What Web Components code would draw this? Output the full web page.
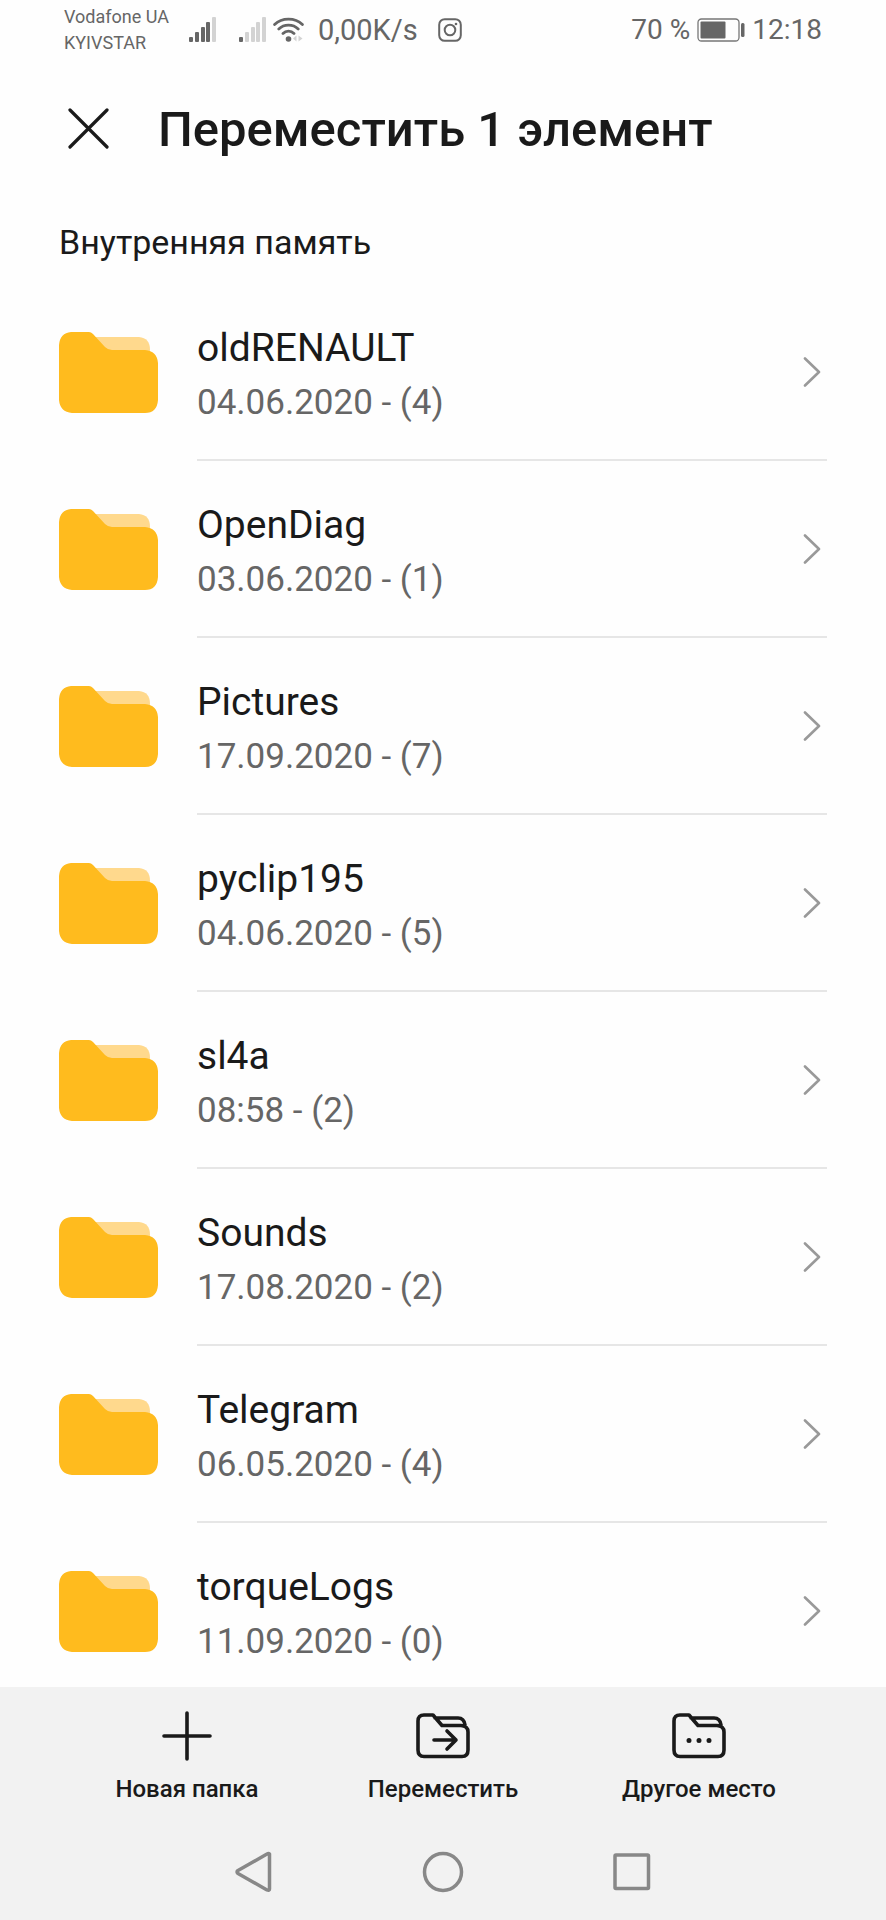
<!DOCTYPE html>
<html lang="ru">
<head>
<meta charset="utf-8">
<meta name="viewport" content="width=device-width, initial-scale=1">
<title>Переместить 1 элемент</title>
<style>
  body { margin: 0; background: #fefefe; color: #1a1a1a; font-family: Roboto, "Noto Sans", sans-serif; }
</style>
</head>
<body>
<move-screen></move-screen>
<script>
const define = (name, html) => {
  const template = document.createElement('template');
  template.innerHTML = html;
  customElements.define(name, class extends HTMLElement {
    constructor() {
      super();
      this.attachShadow({ mode: 'open' }).append(template.content.cloneNode(true));
    }
  });
};

define('status-bar', `
  <style>
    :host { display: flex; align-items: center; height: 60px; padding: 0 64px; color: #666; font-size: 28px; line-height: 32px; white-space: nowrap; }
    svg { display: block; flex: none; }
    .carriers { font-size: 18px; line-height: 26px; margin-right: 20px; }
    .signal { margin-right: 22px; }
    .wifi { margin: 0 14px 0 -16px; }
    .speed { font-size: 29px; }
    .camera { margin-left: 20px; }
    .power { margin-left: auto; display: flex; align-items: center; gap: 7px; }
  </style>
  <div class="carriers">Vodafone UA<br>KYIVSTAR</div>
  <svg class="signal" width="28" height="26" aria-hidden="true">
    <g fill="#666"><rect x="0" y="20" width="4" height="5" rx="1"/><rect x="6" y="15" width="4" height="10" rx="1"/><rect x="12" y="10" width="4" height="15" rx="1"/><rect x="17" y="5" width="4" height="20" rx="1"/></g>
    <rect x="23" width="4" height="25" rx="1" fill="#d3d3d3"/>
  </svg>
  <svg class="signal" width="28" height="26" aria-hidden="true">
    <rect x="0" y="20" width="4" height="5" rx="1" fill="#666"/>
    <g fill="#d3d3d3"><rect x="6" y="15" width="4" height="10" rx="1"/><rect x="12" y="10" width="4" height="15" rx="1"/><rect x="17" y="5" width="4" height="20" rx="1"/><rect x="23" width="4" height="25" rx="1"/></g>
  </svg>
  <svg class="wifi" width="31" height="26" aria-hidden="true">
    <g fill="none" stroke="#666" stroke-width="2.8" stroke-linecap="round"><path d="M1.6 7.5C9 .2 22 .2 29.400 7.500M5.800 12c5.200-5.200 14.200-5.200 19.400 0M10 16.400c3-3 8-3 11 0"/></g>
    <circle cx="15.500" cy="22" r="2.800" fill="#666"/><path d="M23.500 18.500v6l-3.500-3zM25.500 18.500v6l4-3z" fill="#d3d3d3"/>
  </svg>
  <span class="speed">0,00K/s</span>
  <svg class="camera" width="24" height="24" fill="none" stroke="#666" aria-hidden="true">
    <rect x="1.200" y="1.200" width="21.600" height="21.600" rx="5.500" stroke-width="2"/><circle cx="12" cy="12" r="5.300" stroke-width="2"/><circle cx="18" cy="6" r="1.300" fill="#666" stroke="none"/>
  </svg>
  <div class="power">
    <span>70 %</span>
    <svg width="48" height="24" aria-hidden="true">
      <rect x="1" y="1" width="41" height="22" rx="3.500" fill="none" stroke="#777" stroke-width="1.300"/><rect x="3.500" y="3.500" width="25" height="17" rx="1" fill="#666"/><rect x="44" y="5" width="3.500" height="14" rx="1.500" fill="#666"/>
    </svg>
    <span>12:18</span>
  </div>`);

define('page-header', `
  <style>
    :host { display: flex; align-items: center; gap: 49px; padding: 40px 60px 42px 68px; }
    button { display: block; padding: 0; border: 0; background: none; color: inherit; }
    svg { display: block; }
    h1 { margin: 0; font-size: 49px; font-weight: 500; line-height: 60px; }
  </style>
  <button type="button" aria-label="Закрыть"><svg width="41" height="44" fill="none" stroke="currentColor" stroke-width="3.200" stroke-linecap="round"><path d="M2 2l37 37M39 2L2 39"/></svg></button>
  <h1><slot></slot></h1>`);

define('folder-row', `
  <style>
    :host { display: block; padding-left: 59px; }
    a { display: flex; align-items: center; color: inherit; text-decoration: none; }
    svg { display: block; flex: none; }
    .body { flex: 1; display: flex; align-items: center; justify-content: space-between; box-sizing: border-box; height: 177px; margin: 0 59px 0 39px; border-bottom: 2px solid #e6e6e6; }
    .text { display: grid; gap: 12px; padding-top: 4px; }
    .name { font-size: 39px; line-height: 46px; }
    .meta { font-size: 35px; line-height: 40px; color: #666; }
    .chevron { margin-right: 6px; }
  </style>
  <a href="#">
    <svg width="99" height="82" aria-hidden="true">
      <path d="M30 5H80Q91 6 91 18V30H50Z" fill="#ffd98d"/>
      <path d="M12 0H30Q32 0 34 2L46 15Q49 18 53 18H86Q98 19 99 31V68Q98 81 86 81H13Q1 80 0 68V13Q1 1 12 0Z" fill="#ffbb1e"/>
    </svg>
    <span class="body">
      <span class="text"><span class="name"><slot></slot></span><span class="meta"><slot name="meta"></slot></span></span>
      <svg class="chevron" width="18" height="30" fill="none" stroke="#999" stroke-width="2.600" stroke-linecap="round" stroke-linejoin="round" aria-hidden="true"><path d="M2 1.500L16 15L2 28.500"/></svg>
    </span>
  </a>`);

define('tool-action', `
  <style>
    :host { display: block; }
    button { display: grid; justify-items: center; gap: 13px; width: 100%; padding: 0; border: 0; background: none; color: inherit; font: inherit; font-size: 24px; font-weight: 500; line-height: 28px; }
    ::slotted(svg) { display: block; }
  </style>
  <button type="button"><slot name="icon"></slot><slot></slot></button>`);

define('tool-bar', `
  <style>
    :host { display: grid; grid-template-columns: repeat(3, 1fr); padding: 23px 59px 0; background: #f2f2f2; }
  </style>
  <slot></slot>`);

define('system-nav', `
  <style>
    :host { display: grid; grid-template-columns: repeat(3, 1fr); justify-items: center; align-items: center; padding: 48px 18% 27px; background: #f2f2f2; }
    button { display: block; padding: 0; border: 0; background: none; }
    svg { display: block; fill: none; stroke: #888; stroke-width: 3.500; stroke-linejoin: round; }
  </style>
  <button type="button" aria-label="Назад"><svg width="42" height="42"><path d="M36.500 3Q35.500 2 34 3L5 19.500Q3 21 5 22.500L34 39Q36.500 40 36.500 38Z"/></svg></button>
  <button type="button" aria-label="Домой"><svg width="42" height="42"><circle cx="21" cy="21" r="18.500"/></svg></button>
  <button type="button" aria-label="Недавние"><svg width="42" height="42"><rect x="4" y="4" width="33.500" height="33.500" rx="1"/></svg></button>`);

define('move-screen', `
  <style>
    :host { display: flex; flex-direction: column; height: 100vh; }
    status-bar, page-header, tool-bar, system-nav { flex: none; }
    main { flex: 1; min-height: 0; overflow-y: auto; scrollbar-width: none; }
    h2 { margin: 0; padding: 20px 59px 22px; font-size: 34px; font-weight: 400; line-height: 40px; }
  </style>
  <status-bar></status-bar>
  <page-header>Переместить 1 элемент</page-header>
  <main>
    <h2>Внутренняя память</h2>
    <folder-row>oldRENAULT<span slot="meta">04.06.2020 - (4)</span></folder-row>
    <folder-row>OpenDiag<span slot="meta">03.06.2020 - (1)</span></folder-row>
    <folder-row>Pictures<span slot="meta">17.09.2020 - (7)</span></folder-row>
    <folder-row>pyclip195<span slot="meta">04.06.2020 - (5)</span></folder-row>
    <folder-row>sl4a<span slot="meta">08:58 - (2)</span></folder-row>
    <folder-row>Sounds<span slot="meta">17.08.2020 - (2)</span></folder-row>
    <folder-row>Telegram<span slot="meta">06.05.2020 - (4)</span></folder-row>
    <folder-row>torqueLogs<span slot="meta">11.09.2020 - (0)</span></folder-row>
  </main>
  <tool-bar>
    <tool-action>
      <svg slot="icon" width="56" height="52" fill="none" stroke="currentColor" stroke-width="3.600" stroke-linecap="round"><path d="M5 26H51M28 3V49"/></svg>
      Новая папка
    </tool-action>
    <tool-action>
      <svg slot="icon" width="56" height="52" fill="none" stroke="currentColor" stroke-width="3.600" stroke-linecap="round" stroke-linejoin="round"><path d="M9 5H18L27 15.500H46Q53 16 53 22V40Q53 46.500 47 46.500H9Q3 46.500 3 40V11Q3 5 9 5M20 8H43Q49 8 50 15M19 30H41M32 21L41 30L32 39"/></svg>
      Переместить
    </tool-action>
    <tool-action>
      <svg slot="icon" width="56" height="52" fill="none" stroke="currentColor" stroke-width="3.600" stroke-linecap="round" stroke-linejoin="round"><path d="M9 5H18L27 15.500H46Q53 16 53 22V40Q53 46.500 47 46.500H9Q3 46.500 3 40V11Q3 5 9 5M20 8H43Q49 8 50 15"/><path d="M18 30.500h0M28 30.500h0M38 30.500h0" stroke-width="5"/></svg>
      Другое место
    </tool-action>
  </tool-bar>
  <system-nav></system-nav>`);
</script>
</body>
</html>
